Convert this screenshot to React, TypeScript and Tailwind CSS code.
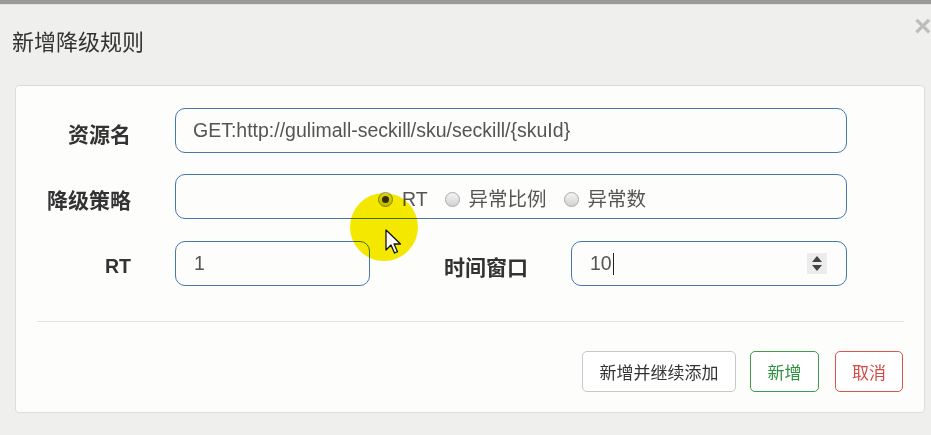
import React from "react";

const cjk = '"Noto Sans CJK SC", "Liberation Sans", sans-serif';
const latin = '"Liberation Sans", "Noto Sans CJK SC", sans-serif';

function Radio({ checked, label }: { checked?: boolean; label: string }) {
  return (
    <div className="flex items-center gap-[9px]">
      <div
        className={
          "w-[15px] h-[15px] rounded-full border flex items-center justify-center " +
          (checked
            ? "border-[#8a8a8a] bg-gradient-to-b from-[#e8e8e8] to-[#c8c8c8]"
            : "border-[#a9a9a9] bg-gradient-to-b from-[#f4f4f4] to-[#d2d2d2]")
        }
      >
        {checked && <div className="w-[7px] h-[7px] rounded-full bg-[#333]" />}
      </div>
      <span className="text-[19.5px] text-[#555]" style={{ fontFamily: latin }}>
        {label}
      </span>
    </div>
  );
}

export default function App() {
  return (
    <div
      className="relative w-[931px] h-[435px] overflow-hidden bg-[#efefed]"
      style={{ fontFamily: cjk }}
    >
      <div className="h-[4px] bg-[#9a9a9a]" />
      <div className="h-[1px] bg-[#e2e2e0]" />
      <div className="pl-[12px] mt-[22px] h-[26px] leading-[26px] text-[22px] text-[#333]">
        新增降级规则
      </div>
      <span
        className="absolute left-[914px] top-[11px] text-[30px] font-bold leading-none text-[#bdbdbd]"
        style={{ fontFamily: latin }}
      >
        ×
      </span>

      <div className="mt-[32px] ml-[15px] w-[910px] h-[328px] rounded-[4px] border border-[#dcdcdc] bg-[#fdfdfc] pt-[22px]">
        {/* Row 1 */}
        <div className="flex items-center h-[45px]">
          <div className="w-[115px] pt-[6px] text-right text-[21px] font-bold text-[#333]">资源名</div>
          <div
            className="ml-[44px] w-[672px] h-[45px] rounded-[10px] border border-[#4577b0] flex items-center pl-[17px] text-[19.5px] text-[#555]"
            style={{ fontFamily: latin }}
          >
            GET:http://gulimall-seckill/sku/seckill/{"{skuId}"}
          </div>
        </div>
        {/* Row 2 */}
        <div className="flex items-center h-[45px] mt-[21px]">
          <div className="w-[115px] pt-[6px] text-right text-[21px] font-bold text-[#333]">降级策略</div>
          <div className="ml-[44px] w-[672px] h-[45px] rounded-[10px] border border-[#4577b0] flex items-center justify-center gap-[17px] pl-[2px] pt-[6px]">
            <Radio checked label="RT" />
            <Radio label="异常比例" />
            <Radio label="异常数" />
          </div>
        </div>
        {/* Row 3 */}
        <div className="flex items-center h-[45px] mt-[22px]">
          <div
            className="w-[115px] pt-[6px] text-right text-[19.5px] font-bold text-[#333]"
            style={{ fontFamily: latin }}
          >
            RT
          </div>
          <div
            className="ml-[44px] w-[195px] h-[45px] rounded-[10px] border border-[#4577b0] flex items-center pl-[18px] text-[19.5px] text-[#555]"
            style={{ fontFamily: latin }}
          >
            1
          </div>
          <div className="w-[158px] pt-[6px] text-right text-[21px] font-bold text-[#333]">时间窗口</div>
          <div
            className="ml-[43px] w-[276px] h-[45px] rounded-[10px] border border-[#4577b0] flex items-center pl-[18px] pr-[19px] text-[19.5px] text-[#555]"
            style={{ fontFamily: latin }}
          >
            <span>10</span>
            <span className="w-[1px] h-[22px] bg-[#222] ml-[1px]" />
            <div className="ml-auto w-[20px] h-[21px] bg-[#ececec] flex flex-col items-center justify-center gap-[3px]">
              <svg width="10" height="6" viewBox="0 0 10 6">
                <path d="M5 0 L10 6 L0 6 Z" fill="#444" />
              </svg>
              <svg width="10" height="6" viewBox="0 0 10 6">
                <path d="M0 0 L10 0 L5 6 Z" fill="#444" />
              </svg>
            </div>
          </div>
        </div>

        <div className="mt-[35px] ml-[21px] mr-[20px] h-[1px] bg-[#e3e3e3]" />

        <div className="mt-[29px] flex justify-end pr-[21px]">
          <button className="w-[154px] h-[41px] rounded-[5px] border border-[#c8c8c8] bg-white text-[17px] text-[#333]">
            新增并继续添加
          </button>
          <button className="ml-[14px] w-[69px] h-[41px] rounded-[5px] border border-[#3d9a4e] bg-white text-[17px] text-[#2f8f40]">
            新增
          </button>
          <button className="ml-[16px] w-[68px] h-[41px] rounded-[5px] border border-[#d9534f] bg-white text-[17px] text-[#d44a46]">
            取消
          </button>
        </div>
      </div>

      {/* cursor highlight */}
      <div className="absolute left-[350px] top-[193px] w-[68px] h-[68px] rounded-full bg-[#f6ea00] mix-blend-multiply" />
      <svg
        className="absolute left-[385px] top-[229px]"
        width="18"
        height="28"
        viewBox="0 0 18 28"
      >
        <path
          d="M1 1 L1 21 L6 16 L9.5 24 L12.5 22.7 L9 15 L15.5 15 Z"
          fill="#fff"
          stroke="#111"
          strokeWidth="1.3"
          strokeLinejoin="round"
        />
      </svg>
    </div>
  );
}
